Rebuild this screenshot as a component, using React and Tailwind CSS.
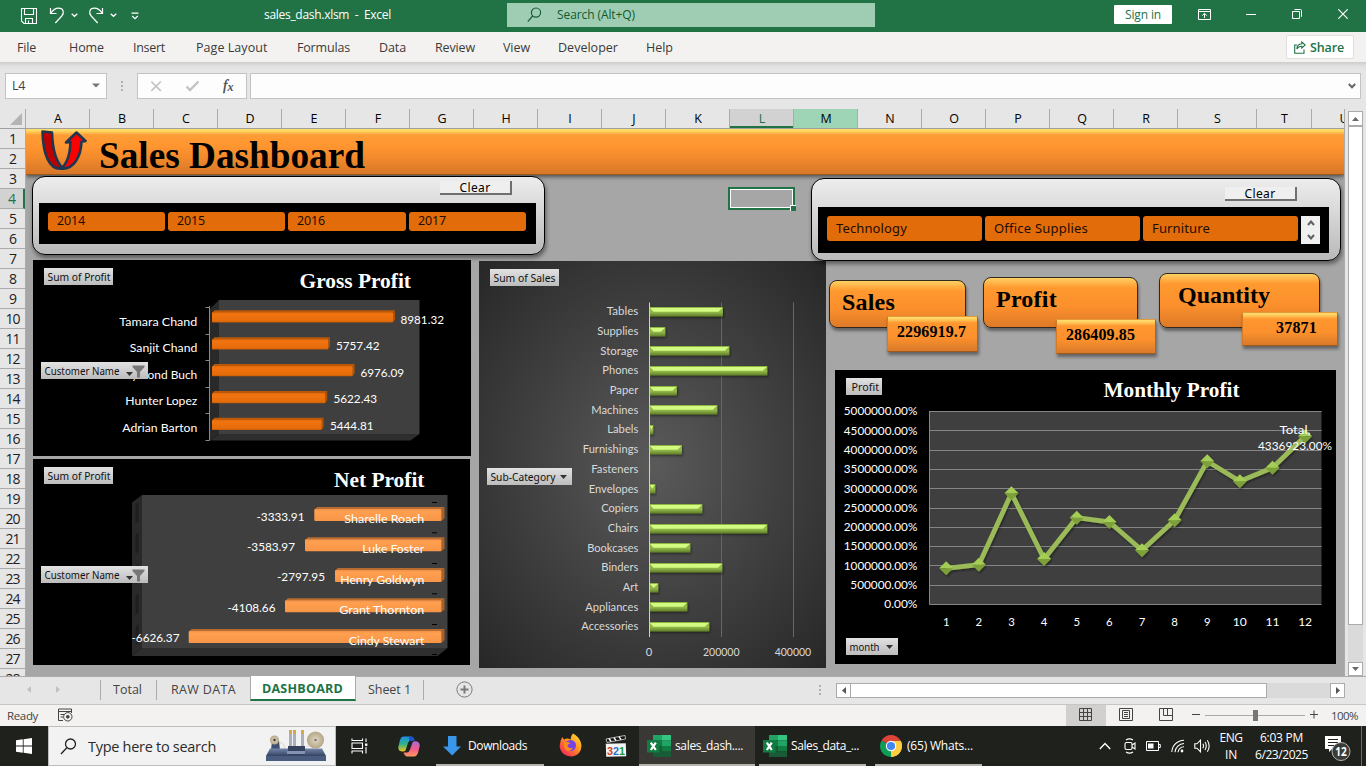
import React, { useLayoutEffect, useRef, useState } from "react";

/* Single-line label whose tracking is adjusted so that it fills a given width. */
function Fit({ w, className = "", children }) {
  const ref = useRef(null);
  const [ls, setLs] = useState(0);
  useLayoutEffect(() => {
    const el = ref.current;
    const n = el.textContent.length;
    const natural = el.getBoundingClientRect().width;
    setLs((w - natural) / n);
  }, [w]);
  return (
    <span ref={ref} className={"inline-block whitespace-pre " + className} style={{ letterSpacing: ls + "px" }}>
      {children}
    </span>
  );
}

/* ---------------------------------------------------------------- title bar */
function Caret({ className = "" }) {
  return (
    <svg width="7" height="5" viewBox="0 0 7 5" className={className}>
      <path d="M0.7 0.7 L3.5 3.3 L6.3 0.7" fill="none" stroke="currentColor" strokeWidth="1.3" />
    </svg>
  );
}

function TitleBar() {
  return (
    <header className="flex h-8 w-full shrink-0 items-center bg-[#217346] text-white">
      <div className="flex h-8 w-[264px] shrink-0 items-center pb-px pl-[20px]">
        <svg width="17" height="17" viewBox="0 0 17 17" fill="none" stroke="#fff" strokeWidth="1.1">
          <path d="M1.5 1.5 H16.5 V16.5 H4 L1.5 14 Z M4.5 1.5 V7.5 H13.5 V1.5 M5.5 16.5 V11.5 H12.5 V16.5 M8.5 16.5 V13.5" />
        </svg>
        <svg width="16" height="17" viewBox="0 0 16 17" fill="none" stroke="#fff" strokeWidth="1.2" className="ml-[12px]">
          <path d="M1.5 1 V6.5 H7.5 M1.7 6.3 C4 3 6.5 1.2 9.5 1.2 C14.8 1.2 15.4 6 12.8 9 L6.3 16" />
        </svg>
        <Caret className="ml-[6px]" />
        <svg width="16" height="17" viewBox="0 0 16 17" fill="none" stroke="#fff" strokeWidth="1.2" className="ml-[10px]">
          <path d="M14.5 1 V6.5 H8.5 M14.3 6.3 C12 3 9.5 1.2 6.5 1.2 C1.2 1.2 0.6 6 3.2 9 L9.7 16" />
        </svg>
        <Caret className="ml-[6px]" />
        <svg width="8" height="8" viewBox="0 0 8 8" fill="none" stroke="#fff" strokeWidth="1.2" className="ml-[14px]">
          <path d="M0.5 1.2 H7.5 M1.2 4 L4 6.6 L6.8 4" />
        </svg>
      </div>
      <div className="w-[243px] shrink-0 pb-[3px] font-['Open_Sans',sans-serif] text-[12px] leading-4">
        <Fit w={127}>sales_dash.xlsm  -  Excel</Fit>
      </div>
      <div className="mb-[2px] flex h-6 w-[368px] shrink-0 items-center bg-[#9fcdb3] pl-5 text-[#0f5a30]">
        <svg width="15" height="16" viewBox="0 0 15 16" fill="none" stroke="#185c37" strokeWidth="1.2">
          <circle cx="9" cy="5.6" r="4.6" />
          <path d="M5.6 9 L0.8 14.6" />
        </svg>
        <div className="ml-[15px] font-['Open_Sans',sans-serif] text-[12px] leading-4">
          <Fit w={78}>Search (Alt+Q)</Fit>
        </div>
      </div>
      <div className="ml-auto flex h-8 items-center">
        <div className="mb-[3px] mr-[26px] flex h-[19px] w-[58px] items-center justify-center rounded-[1px] bg-white font-['Open_Sans',sans-serif] text-[12px] leading-4 text-[#217346]">
          <Fit w={36}>Sign in</Fit>
        </div>
        <svg width="13" height="11" viewBox="0 0 13 11" fill="none" stroke="#fff" className="mb-[3px] mr-[35px]">
          <path d="M0.5 0.5 H12.5 V10.5 H0.5 Z M0.5 2.5 H12.5 M6.5 9 V4.5 M4.2 6.6 L6.5 4.4 L8.8 6.6" />
        </svg>
        <svg width="10" height="11" viewBox="0 0 10 11" stroke="#fff" className="mb-[4px] mr-[36px]">
          <path d="M0 5.5 H10" />
        </svg>
        <svg width="10" height="10" viewBox="0 0 10 10" fill="none" stroke="#fff" className="mb-[4px] mr-[36px]">
          <path d="M0.5 2.5 H7.5 V9.5 H0.5 Z M2.5 0.5 H8.5 Q9.5 0.5 9.5 1.5 V7.8" />
        </svg>
        <svg width="10" height="10" viewBox="0 0 10 10" stroke="#fff" strokeWidth="1.2" className="mb-[4px] mr-[18px]">
          <path d="M0.3 0.3 L9.7 9.7 M9.7 0.3 L0.3 9.7" />
        </svg>
      </div>
    </header>
  );
}

/* ---------------------------------------------------------------- menu bar */
function MenuBar() {
  return (
    <nav className="flex h-[30px] w-full shrink-0 items-center bg-[#f3f2f1] pl-[17px] font-['Open_Sans',sans-serif] text-[12.5px] leading-4 text-[#3b3a39]">
      <div className="mt-px flex">
        <div className="w-[52px] shrink-0"><Fit w={19}>File</Fit></div>
        <div className="w-[64px] shrink-0"><Fit w={35}>Home</Fit></div>
        <div className="w-[63px] shrink-0"><Fit w={32}>Insert</Fit></div>
        <div className="w-[101px] shrink-0"><Fit w={71.5}>Page Layout</Fit></div>
        <div className="w-[82px] shrink-0"><Fit w={53}>Formulas</Fit></div>
        <div className="w-[56px] shrink-0"><Fit w={27}>Data</Fit></div>
        <div className="w-[68px] shrink-0"><Fit w={40}>Review</Fit></div>
        <div className="w-[55px] shrink-0"><Fit w={27}>View</Fit></div>
        <div className="w-[88px] shrink-0"><Fit w={60}>Developer</Fit></div>
        <div className="shrink-0"><Fit w={27}>Help</Fit></div>
      </div>
      <div className="ml-auto mr-[12px] flex h-6 w-[68px] items-center rounded-[2px] border border-[#e1dfdd] bg-white pl-[7px] font-semibold text-[#217346]">
        <svg width="12" height="13" viewBox="0 0 12 13" fill="none" stroke="#217346" strokeWidth="1.1">
          <path d="M3 4 H0.7 V12.2 H10 V8.5 M7.8 1 L11.3 4 L7.8 7 V5.2 C5.5 5 4 6 2.8 8 C3 5 5 3 7.8 2.8 Z" />
        </svg>
        <div className="ml-1 mt-px"><Fit w={34}>Share</Fit></div>
      </div>
    </nav>
  );
}

/* ---------------------------------------------------------------- formula bar */
function FormulaBar() {
  return (
    <div className="flex h-[47px] w-full shrink-0 bg-[#e6e6e6]">
      <div className="flex h-full w-full bg-[linear-gradient(180deg,#cdcccb_0px,#e0e0e0_4px,#e6e6e6_8px)] pl-[5px] pt-[11px]">
        <div className="flex h-[26px] w-[102px] items-center justify-between border border-[#c3c3c3] bg-[#fdfdfd] pl-[6px] pr-[6px] pt-px font-['Open_Sans',sans-serif] text-[12.5px] text-[#444]">
          <Fit w={13}>L4</Fit>
          <svg width="8" height="5" viewBox="0 0 8 5" className="mb-[3px]"><path d="M0 0.5 H8 L4 4.5 Z" fill="#777" /></svg>
        </div>
        <svg width="30" height="26" viewBox="0 0 30 26" fill="#b0b0b0">
          <rect x="14" y="8" width="2" height="2" /><rect x="14" y="12" width="2" height="2" /><rect x="14" y="16" width="2" height="2" />
        </svg>
        <div className="flex h-[26px] w-[110px] items-center border border-[#c3c3c3] bg-[#fdfdfd]">
          <svg width="108" height="24" viewBox="0 0 108 24" fill="none">
            <path d="M13.3 7.5 L22.8 16.8 M22.8 7.5 L13.3 16.8" stroke="#c3c3c3" strokeWidth="1.7" />
            <path d="M48.5 12.5 L52 16 L60.5 7.5" stroke="#c3c3c3" strokeWidth="2.4" />
            <text x="85" y="15.5" fontFamily="Liberation Serif, serif" fontStyle="italic" fontSize="15" fill="#444" stroke="#444" strokeWidth="0.3">f</text>
            <text x="89.5" y="16.5" fontFamily="Liberation Serif, serif" fontStyle="italic" fontWeight="bold" fontSize="12" fill="#555">x</text>
          </svg>
        </div>
        <div className="ml-[3px] flex h-[26px] w-[1111px] items-center justify-end border border-[#c3c3c3] bg-[#fdfdfd] pr-[4px] text-[#666]">
          <svg width="8" height="6" viewBox="0 0 8 6" className="mb-px"><path d="M0.8 1 L4 4.3 L7.2 1" fill="none" stroke="#666" strokeWidth="2" /></svg>
        </div>
      </div>
    </div>
  );
}

/* ---------------------------------------------------------------- grid headers */
const COLS = "ABCDEFGHIJKLMNOPQR".split("");
function ColumnHeaders() {
  const base = "flex h-full shrink-0 items-center justify-center border-r border-[#ababab] pl-px pt-px";
  return (
    <div className="flex h-5 w-[1344px] shrink-0 overflow-hidden border-b border-[#9f9f9f] bg-[#e6e6e6] font-['Open_Sans',sans-serif] text-[12.5px] text-black">
      <div className="flex h-full w-[26px] shrink-0 items-end justify-end border-r border-[#ababab] pb-[3px] pr-[3px]">
        <svg width="12" height="12" viewBox="0 0 12 12"><path d="M12 0 V12 H0 Z" fill="#b4b4b4" /></svg>
      </div>
      {COLS.map((c) => (
        <div
          key={c}
          className={
            base + " w-16" +
            (c === "L"
              ? " bg-[#d2d2d2] text-[#217346] shadow-[inset_0_-2px_0_#217346]"
              : c === "M"
                ? " bg-[#9fd5b7]"
                : "")
          }
        >
          {c}
        </div>
      ))}
      <div className={base + " w-[79px]"}>S</div>
      <div className={base + " w-[55px]"}>T</div>
      <div className="flex h-full w-16 shrink-0 items-center justify-center pt-px">U</div>
    </div>
  );
}

function RowHeaders() {
  return (
    <div className="h-[547px] w-[26px] shrink-0 overflow-hidden border-r border-[#ababab] bg-[#e6e6e6] font-['Open_Sans',sans-serif] text-[14px] tracking-[-0.9px] text-[#222]">
      {Array.from({ length: 28 }, (_, i) => i + 1).map((n) => (
        <div
          key={n}
          className={
            "flex h-5 items-center justify-center border-b border-[#ababab] pt-px leading-[18px]" +
            (n === 4 ? " border-r-2 border-r-[#217346] bg-[#d2d2d2] text-[#217346]" : "")
          }
        >
          {n}
        </div>
      ))}
    </div>
  );
}

/* ---------------------------------------------------------------- svg helpers */
function Label({ x, y, w, end, fill = "#fff", size = 12, font = "Lato, sans-serif", weight, children }) {
  return (
    <text
      x={end ? x - w : x}
      y={y}
      textLength={w}
      lengthAdjust="spacingAndGlyphs"
      fill={fill}
      fontSize={size}
      fontFamily={font}
      fontWeight={weight}
    >
      {children}
    </text>
  );
}
const SERIF = "Liberation Serif, serif";
const UI = "Noto Sans, sans-serif";

function Chip({ x, y, w, tx, tw, caret, funnel, children }) {
  return (
    <g>
      <rect x={x} y={y} width={w} height="17" fill="url(#chip)" />
      <Label x={tx} y={y + 13} w={tw} size={11.5} font={UI} fill="#111">{children}</Label>
      {caret && <path d={`M${caret} ${y + 7} h7 l-3.5 4 z`} fill="#333" />}
      {funnel && (
        <g>
          <path d={`M${x + 85} ${y + 10} h7 l-3.5 4 z`} fill="#333" />
          <path d={`M${x + 91.5} ${y + 3.5} h12 v1.5 l-4.5 5 v5.5 h-3 v-5.5 l-4.5 -5 z`} fill="#777" />
        </g>
      )}
    </g>
  );
}

function SharedDefs() {
  return (
    <svg width="0" height="0" className="absolute">
      <defs>
        <linearGradient id="chip" x1="0" y1="0" x2="0" y2="1">
          <stop offset="0" stopColor="#e2e2e2" /><stop offset="1" stopColor="#bcbcbc" />
        </linearGradient>
        <linearGradient id="barDark" x1="0" y1="0" x2="0" y2="1">
          <stop offset="0" stopColor="#e2690b" /><stop offset="0.2" stopColor="#f27410" /><stop offset="0.85" stopColor="#e46c0a" /><stop offset="1" stopColor="#c25a06" />
        </linearGradient>
        <linearGradient id="barLight" x1="0" y1="0" x2="0" y2="1">
          <stop offset="0" stopColor="#f0924a" /><stop offset="0.2" stopColor="#ff9f50" /><stop offset="1" stopColor="#f79646" />
        </linearGradient>
        <linearGradient id="green" x1="0" y1="0" x2="0" y2="1">
          <stop offset="0" stopColor="#8db63f" /><stop offset="0.55" stopColor="#92b84c" /><stop offset="1" stopColor="#5e7c25" />
        </linearGradient>
        <radialGradient id="panel" cx="0.5" cy="0.5" r="0.72">
          <stop offset="0" stopColor="#5a5a5a" /><stop offset="1" stopColor="#262626" />
        </radialGradient>
        <filter id="soft" x="-20%" y="-50%" width="140%" height="220%">
          <feDropShadow dx="1" dy="1.5" stdDeviation="1" floodColor="#000" floodOpacity="0.45" />
        </filter>
      </defs>
    </svg>
  );
}

/* ---------------------------------------------------------------- charts */
const GROSS = [
  ["Tamara Chand", 78, 326, 310.3, 395, "8981.32", 400.5, 323.7],
  ["Sanjit Chand", 67.5, 352, 337.3, 330, "5757.42", 336, 350],
  ["Raymond Buch", 79, 378.7, 364, 354.7, "6976.09", 360.5, 376.7],
  ["Hunter Lopez", 72, 405, 391, 327.3, "5622.43", 333.5, 403],
  ["Adrian Barton", 75, 432, 417.7, 323.7, "5444.81", 330, 429.7],
];

function GrossProfit() {
  return (
    <svg width="438" height="196" viewBox="33 260 438 196" className="absolute left-[7px] top-[131px] bg-black">
      <path d="M219 300 H419.5 V434 H219 Z" fill="#3f3f3f" />
      <path d="M210 309 L219 300 V434 L210 440.5 Z" fill="#292929" />
      <path d="M210 440.5 L219 434 H419.5 L410.5 440.5 Z" fill="#2e2e2e" />
      <path d="M209.5 306 V440.5 M205.5 307.5 h4 M205.5 334.5 h4 M205.5 360.5 h4 M205.5 387.5 h4 M205.5 413.5 h4 M205.5 440.5 h4" stroke="#8a8a8a" fill="none" />
      {GROSS.map(([name, nw, ny, top, end, val, vx, vy]) => (
        <g key={name}>
          <path d={`M212 ${top + 2.5} L214.5 ${top} H${end} L${end - 2} ${top + 2.5} Z`} fill="#b85808" />
          <path d={`M${end - 2} ${top + 2.5} L${end} ${top} V${top + 9} L${end - 2} ${top + 12.3} Z`} fill="#ad5308" />
          <rect x="212" y={top + 2} width={end - 214} height="10.3" rx="1" fill="url(#barDark)" />
          <Label x={197.3} y={ny} w={nw} end>{name}</Label>
          <Label x={vx} y={vy} w={43.5} size={11.8}>{val}</Label>
        </g>
      ))}
      <Label x={299.5} y={288} w={111.5} size={20.5} font={SERIF} weight="bold">Gross Profit</Label>
      <Chip x={44} y={268} w={69} tx={47.5} tw={63}>Sum of Profit</Chip>
      <Chip x={41} y={362} w={107} tx={44.5} tw={75} funnel>Customer Name</Chip>
    </svg>
  );
}

const NET = [
  ["Sharelle Roach", 80, 523, 507, 314.3, "-3333.91", 304.5, 521],
  ["Luke Foster", 62, 553, 537.3, 305, "-3583.97", 295, 551],
  ["Henry Goldwyn", 84, 584, 568, 335, "-2797.95", 325, 581],
  ["Grant Thornton", 85, 614, 598.3, 285, "-4108.66", 275.5, 612],
  ["Cindy Stewart", 75.5, 645, 629, 188.7, "-6626.37", 179.5, 642],
];

function NetProfit() {
  return (
    <svg width="437" height="206" viewBox="33 459 437 206" className="absolute left-[7px] top-[330px] bg-black">
      <path d="M142 495 H447.5 V648 H142 Z" fill="#3f3f3f" />
      <path d="M132 502.5 L142 495 V648 L132 656 Z" fill="#292929" />
      <path d="M132 656 L142 648 H447.5 L437.5 656 Z" fill="#2e2e2e" />
      {NET.map(([name, nw, ny, top, left, val, vx, vy]) => (
        <g key={name}>
          <path d={`M135.5 ${top - 2} l3 -3 v19 l-3 3 z`} fill="#1e1e1e" />
          <path d={`M${left} ${top + 2.5} L${left + 3} ${top} H444.5 L441.5 ${top + 2.5} Z`} fill="#b96c2f" />
          <path d={`M441.5 ${top + 2.5} L444.5 ${top} V${top + 11} L441.5 ${top + 14} Z`} fill="#a9622a" />
          <rect x={left} y={top + 2} width={441.5 - left} height="12" rx="1" fill="url(#barLight)" />
          <path d={`M432 ${top - 4.5} h5`} stroke="#000" />
          <Label x={424.3} y={ny} w={nw} end>{name}</Label>
          <Label x={vx} y={vy} w={48} end size={11.8}>{val}</Label>
        </g>
      ))}
      <path d="M432 654.5 h5" stroke="#000" />
      <Label x={334} y={487} w={90.5} size={20.5} font={SERIF} weight="bold">Net Profit</Label>
      <Chip x={44} y={467} w={69} tx={47.5} tw={63}>Sum of Profit</Chip>
      <Chip x={41} y={566} w={107} tx={44.5} tw={75} funnel>Customer Name</Chip>
    </svg>
  );
}

const SUBCATS = [
  ["Tables", 31.5, 723.3], ["Supplies", 41, 665.7], ["Storage", 38, 729.7], ["Phones", 36, 767.7],
  ["Paper", 28.5, 677.3], ["Machines", 47, 717.7], ["Labels", 31, 653.7], ["Furnishings", 55.5, 682.3],
  ["Fasteners", 47, 650.5], ["Envelopes", 49.5, 655.7], ["Copiers", 37, 702.7], ["Chairs", 30.5, 767.7],
  ["Bookcases", 51, 690.7], ["Binders", 37, 722.7], ["Art", 15.5, 658.7], ["Appliances", 53, 687.7],
  ["Accessories", 57, 709.7],
];

function SalesBySubCategory() {
  return (
    <svg width="347" height="407" viewBox="479 261 347 407" className="absolute left-[453px] top-[132px]">
      <rect x="479" y="261" width="347" height="407" fill="url(#panel)" />
      <path d="M721.5 302.5 V637 M793.5 302.5 V637" stroke="#666" />
      {SUBCATS.map(([name, w, right], i) => {
        const top = Math.round(307 + 19.69 * i);
        const end = right - 0.4;
        const len = end - 649;
        const b = Math.min(4.5, len / 2);
        return (
          <g key={name}>
            <g filter={len > 2 ? "url(#soft)" : undefined}>
              <rect x="649" y={top} width={len} height="9.5" fill="url(#green)" />
              {len > 2 && <path d={`M650 ${top + 1} H${end - 0.5} L${end - b} ${top + 4.8} H${649 + b} Z`} fill="#d3fb82" />}
            </g>
            <Label x={638.3} y={315.3 + 19.69 * i} w={w} end size={11.5} fill="#d9d9d9">{name}</Label>
          </g>
        );
      })}
      <path d="M649.5 302.5 V637" stroke="#cfcfcf" />
      <Label x={645.7} y={656} w={6.5} size={11.5} fill="#d9d9d9">0</Label>
      <Label x={703} y={656} w={36.5} size={11.5} fill="#d9d9d9">200000</Label>
      <Label x={774.7} y={656} w={36.5} size={11.5} fill="#d9d9d9">400000</Label>
      <Chip x={490} y={269} w={69} tx={493.5} tw={62}>Sum of Sales</Chip>
      <Chip x={487} y={468} w={85} tx={490.5} tw={65} caret={560}>Sub-Category</Chip>
    </svg>
  );
}

const MONTH_Y = [568.3, 564.7, 493.3, 559, 517.7, 522, 550.3, 520.3, 461.3, 481.3, 467.7, 436.3];
const MONTH_X = MONTH_Y.map((_, i) => 946.2 + 32.63 * i);
const TICKS = ["5000000.00%", "4500000.00%", "4000000.00%", "3500000.00%", "3000000.00%", "2500000.00%", "2000000.00%", "1500000.00%", "1000000.00%", "500000.00%", "0.00%"];

function MonthlyProfit() {
  return (
    <svg width="501" height="294" viewBox="835 370 501 294" className="absolute left-[809px] top-[241px] bg-black">
      <rect x="929" y="411" width="392.5" height="193.5" fill="#3f3f3f" />
      {TICKS.map((t, i) => (
        <g key={t}>
          <path d={`M929.5 ${Math.round(411 + 19.3 * i) + 0.5} H1321.5`} stroke="#868686" />
          <Label x={917.3} y={415.3 + 19.3 * i} w={i === 10 ? 33 : i === 9 ? 67 : 73.5} end size={12.2}>{t}</Label>
        </g>
      ))}
      <path d="M929.5 411 V604.5" stroke="#868686" />
      <g filter="url(#soft)">
        <polyline points={MONTH_X.map((x, i) => `${x},${MONTH_Y[i]}`).join(" ")} fill="none" stroke="#9bbb59" strokeWidth="4.8" strokeLinejoin="round" />
        {MONTH_X.map((x, i) => (
          <g key={i}>
            <path d={`M${x - 7} ${MONTH_Y[i]} L${x} ${MONTH_Y[i] - 7} L${x + 7} ${MONTH_Y[i]} Z`} fill="#a3cd55" />
            <path d={`M${x - 7} ${MONTH_Y[i]} L${x} ${MONTH_Y[i] + 7} L${x + 7} ${MONTH_Y[i]} Z`} fill="#7da03b" />
          </g>
        ))}
      </g>
      {MONTH_X.map((x, i) => (
        <Label key={i} x={x - (i > 8 ? 7 : 3.3)} y={626} w={i > 8 ? 14 : 6.6} size={12.2}>{String(i + 1)}</Label>
      ))}
      <Label x={1279.5} y={433.7} w={31}>Total,</Label>
      <Label x={1258} y={449.7} w={74} size={11.8}>4336923.00%</Label>
      <Label x={1103.5} y={397} w={136} size={20.5} font={SERIF} weight="bold">Monthly Profit</Label>
      <Chip x={846} y={378} w={36} tx={851.5} tw={27.5}>Profit</Chip>
      <Chip x={846} y={638} w={52} tx={849.5} tw={30} caret={886}>month</Chip>
    </svg>
  );
}

/* ---------------------------------------------------------------- slicers and cards */
function ClearButton({ className }) {
  return (
    <div className={"flex h-[14px] w-[72px] items-start justify-center overflow-hidden border-b-2 border-r-2 border-b-[#6f6f6f] border-r-[#6f6f6f] bg-[#efefef] font-['Noto_Sans',sans-serif] text-[12px] leading-[14px] text-black " + className}>
      <Fit w={31}>Clear</Fit>
    </div>
  );
}

function YearSlicer() {
  const b = "flex h-[19px] items-center rounded-[3px] bg-[#e36c0a] pl-[9px] font-['Noto_Sans',sans-serif] text-[12.5px] leading-none text-[#1c0d00]";
  return (
    <section className="absolute left-[6px] top-[47px] flex h-[79px] w-[513px] flex-col rounded-[13px] border-[1.5px] border-black bg-[linear-gradient(180deg,#ededed,#b9b9b9)] pl-[6px] pt-[4px] shadow-[1px_3px_4px_rgba(0,0,0,0.45)]">
      <ClearButton className="ml-[401px]" />
      <div className="mt-[8px] flex h-[41px] w-[497px] gap-[3px] bg-black pl-[9px] pt-[9px]">
        <div className={b + " w-[117px]"}><Fit w={28}>2014</Fit></div>
        <div className={b + " w-[117px]"}><Fit w={28}>2015</Fit></div>
        <div className={b + " w-[118px]"}><Fit w={28}>2016</Fit></div>
        <div className={b + " w-[117px]"}><Fit w={28}>2017</Fit></div>
      </div>
    </section>
  );
}

function CategorySlicer() {
  const b = "flex h-[25px] w-[155px] items-center rounded-[3px] bg-[#e36c0a] pl-[9px] font-['Noto_Sans',sans-serif] text-[13px] leading-none text-[#1c0d00]";
  return (
    <section className="absolute left-[785px] top-[49px] flex h-[83px] w-[530px] flex-col rounded-[13px] border-[1.5px] border-black bg-[linear-gradient(180deg,#ededed,#b9b9b9)] pl-[6px] pt-[8px] shadow-[1px_3px_4px_rgba(0,0,0,0.45)]">
      <ClearButton className="ml-[407px]" />
      <div className="mt-[6px] flex h-[46px] w-[511px] gap-[3px] bg-black pl-[9px] pt-[9px]">
        <div className={b}><Fit w={71}>Technology</Fit></div>
        <div className={b}><Fit w={94}>Office Supplies</Fit></div>
        <div className={b}><Fit w={58}>Furniture</Fit></div>
        <div className="flex h-[28px] w-[19px] flex-col items-center justify-between bg-[#f0f0f0] py-[4px]">
          <svg width="8" height="6" viewBox="0 0 8 6"><path d="M1 5 L4 1.5 L7 5" fill="none" stroke="#606060" strokeWidth="2" /></svg>
          <svg width="8" height="6" viewBox="0 0 8 6"><path d="M1 1 L4 4.5 L7 1" fill="none" stroke="#606060" strokeWidth="2" /></svg>
        </div>
      </div>
    </section>
  );
}

const CARD =
  "absolute rounded-[8px] border-[1.5px] border-[#33281c] bg-[linear-gradient(180deg,#ffd166_0px,#ffb347_5px,#ff992f_10px,#fb8f2c_60%,#dd7a28_100%)] font-['Liberation_Serif',serif] text-[24px] font-bold leading-6 text-black shadow-[1px_3px_3px_rgba(0,0,0,0.4)]";
const VALUE =
  "absolute border border-b-[#a05a1c] border-l-[#d27a25] border-r-[#b0641f] border-t-[#e59a3a] bg-[linear-gradient(180deg,#ffe070_0px,#ffc455_3px,#ff962f_6px,#fc912d_60%,#d97a2a_100%)] font-['Liberation_Serif',serif] text-[16px] font-bold leading-4 text-black shadow-[1px_3px_3px_rgba(0,0,0,0.4)]";

function Kpis() {
  return (
    <>
      <div className={CARD + " left-[803px] top-[151px] h-[48px] w-[137px] pl-[12px] pt-[9px]"}><Fit w={53}>Sales</Fit></div>
      <div className={CARD + " left-[957px] top-[148px] h-[51px] w-[155px] pl-[12px] pt-[9px]"}><Fit w={61}>Profit</Fit></div>
      <div className={CARD + " left-[1133px] top-[144px] h-[55px] w-[161px] pl-[18px] pt-[9px]"}><Fit w={92}>Quantity</Fit></div>
      <div className={VALUE + " left-[861px] top-[187px] h-[36px] w-[91px] pl-[9px] pt-[7px]"}><Fit w={69}>2296919.7</Fit></div>
      <div className={VALUE + " left-[1030px] top-[190px] h-[35px] w-[100px] pl-[9px] pt-[7px]"}><Fit w={69}>286409.85</Fit></div>
      <div className={VALUE + " left-[1216px] top-[183px] h-[34px] w-[96px] pl-[33px] pt-[7px]"}><Fit w={41}>37871</Fit></div>
    </>
  );
}

function Banner() {
  return (
    <div className="flex h-[46px] w-full items-start border-b border-[#9a5a1e] bg-[linear-gradient(180deg,#ffdf6b_0px,#ffd65f_2px,#ff9c35_6px,#ff9630_16px,#f48b2c_28px,#d87828_44px)] shadow-[0_2px_4px_rgba(0,0,0,0.5)]">
      <svg width="46" height="41" viewBox="0 0 46 41" className="ml-[15px] mt-[1px]">
        <path d="M1.5 1.5 L11 2.5 C11.5 18 14 31 22 38.5 C8 41 2 24 1.5 1.5 Z" fill="#c00000" stroke="#1f3652" strokeWidth="2.6" strokeLinejoin="round" />
        <path d="M20 38.5 C26 34 29 24 29.5 12 L25 12.5 L35.5 2.5 L44.5 11 L40.5 11.8 C40 26 33 40 20 38.5 Z" fill="#ff0000" stroke="#1f3652" strokeWidth="2.6" strokeLinejoin="round" />
      </svg>
      <div className="ml-[12px] mt-[5px] h-[40px] font-['Liberation_Serif',serif] text-[37.3px] font-bold leading-[44px] text-black">
        <Fit w={266}>Sales Dashboard</Fit>
      </div>
    </div>
  );
}

function Sheet() {
  return (
    <main className="relative h-[547px] w-[1318px] shrink-0 overflow-hidden bg-[#a6a6a6]">
      <SharedDefs />
      <Banner />
      <div className="absolute left-[702px] top-[58px] h-[23px] w-[67px] border-2 border-[#217346]">
        <div className="h-full w-full border border-white" />
      </div>
      <div className="absolute left-[764px] top-[76px] h-[6px] w-[6px] border-l border-t border-white bg-[#217346]" />
      <YearSlicer />
      <GrossProfit />
      <NetProfit />
      <SalesBySubCategory />
      <CategorySlicer />
      <Kpis />
      <MonthlyProfit />
    </main>
  );
}

function VScroll() {
  return (
    <div className="flex h-[567px] w-[22px] shrink-0 flex-col border-l border-[#ababab] bg-[#e6e6e6] pl-[3px] pt-[2px]">
      <div className="flex h-[15px] w-[15px] items-center justify-center border border-[#ababab] bg-white">
        <svg width="7" height="4" viewBox="0 0 7 4"><path d="M0 4 L3.5 0 L7 4 Z" fill="#6a6a6a" /></svg>
      </div>
      <div className="h-[499px] w-[15px] border border-[#ababab] bg-white" />
      <div className="h-[37px] w-[15px] bg-[#dadada]" />
      <div className="flex h-[14px] w-[15px] items-center justify-center border border-[#ababab] bg-white">
        <svg width="7" height="4" viewBox="0 0 7 4"><path d="M0 0 L3.5 4 L7 0 Z" fill="#6a6a6a" /></svg>
      </div>
    </div>
  );
}

/* ---------------------------------------------------------------- sheet tabs and status */
function SheetTabs() {
  return (
    <div className="flex h-[29px] w-full shrink-0 border-b border-[#c6c6c6] bg-[#e6e6e6] font-['Open_Sans',sans-serif] text-[12.5px] leading-4 text-[#444]">
      <div className="flex w-full border-t border-[#ababab] bg-[#e6e6e6]">
        <div className="flex w-[100px] items-center pb-[2px] pl-[27px]">
          <svg width="4" height="7" viewBox="0 0 4 7"><path d="M4 0 V7 L0 3.5 Z" fill="#c0c0c0" /></svg>
          <svg width="4" height="7" viewBox="0 0 4 7" className="ml-[25px]"><path d="M0 0 V7 L4 3.5 Z" fill="#c0c0c0" /></svg>
        </div>
        <div className="mt-[3px] flex h-5 w-[57px] items-center border-l border-r border-[#ababab] pl-[12px]"><Fit w={29}>Total</Fit></div>
        <div className="mt-[3px] flex h-5 w-[93px] items-center pl-[14px]"><Fit w={65}>RAW DATA</Fit></div>
        <div className="-mt-px flex h-[25px] w-[106px] items-center border-b-2 border-l border-r border-b-[#217346] border-l-[#ababab] border-r-[#ababab] bg-white pl-[11px] pt-[3px] font-bold text-[#217346]"><Fit w={81}>DASHBOARD</Fit></div>
        <div className="mt-[3px] flex h-5 w-[68px] items-center border-r border-[#ababab] pl-[12px]"><Fit w={43}>Sheet 1</Fit></div>
        <svg width="17" height="17" viewBox="0 0 17 17" fill="none" stroke="#7a7a7a" className="ml-[32px] mt-[4px]">
          <circle cx="8.5" cy="8.5" r="7.6" />
          <path d="M8.5 4.5 V12.5 M4.5 8.5 H12.5" strokeWidth="2" />
        </svg>
        <svg width="2" height="11" viewBox="0 0 2 11" fill="#b0b0b0" className="ml-auto mr-[15px] mt-[8px]">
          <rect y="0" width="2" height="2" /><rect y="4" width="2" height="2" /><rect y="8" width="2" height="2" />
        </svg>
        <div className="mr-[21px] mt-[6px] flex h-[15px] w-[509px]">
          <div className="flex w-[15px] items-center justify-center border border-[#ababab] bg-white">
            <svg width="4" height="7" viewBox="0 0 4 7"><path d="M4 0 V7 L0 3.5 Z" fill="#555" /></svg>
          </div>
          <div className="w-[416px] border border-l-0 border-[#ababab] bg-white" />
          <div className="w-[63px] bg-[#dadada]" />
          <div className="flex w-[15px] items-center justify-center border border-[#ababab] bg-white">
            <svg width="4" height="7" viewBox="0 0 4 7"><path d="M0 0 V7 L4 3.5 Z" fill="#555" /></svg>
          </div>
        </div>
      </div>
    </div>
  );
}

function StatusBar() {
  return (
    <div className="flex h-[21px] w-full shrink-0 items-center bg-[#f3f2f1] pl-[7px] font-['Open_Sans',sans-serif] text-[11.5px] leading-4 text-[#444]">
      <Fit w={31}>Ready</Fit>
      <svg width="15" height="14" viewBox="0 0 15 14" fill="none" stroke="#444" className="mb-[2px] ml-[20px]">
        <path d="M5 12.5 H0.5 V1 H13.5 V5 M0.5 3.5 H13.5 M2.5 6.5 H6 M2.5 9 H5" />
        <circle cx="9.8" cy="8.8" r="4.2" />
        <circle cx="9.8" cy="8.8" r="1.4" fill="#444" />
      </svg>
      <div className="ml-auto flex h-full items-center">
        <div className="flex h-full w-10 items-center bg-[#d2d0ce] pb-[2px] pl-[13px]">
          <svg width="13" height="13" viewBox="0 0 13 13" fill="none" stroke="#444"><path d="M0.5 0.5 H12.5 V12.5 H0.5 Z M4.5 0.5 V12.5 M8.5 0.5 V12.5 M0.5 4.5 H12.5 M0.5 8.5 H12.5" /></svg>
        </div>
        <svg width="14" height="13" viewBox="0 0 14 13" fill="none" stroke="#444" className="mb-[2px] ml-[13px]"><path d="M0.5 0.5 H13.5 V12.5 H0.5 Z M3.5 2.5 H10.5 V10.5 H3.5 Z M5 4.5 H9 M5 6.5 H9 M5 8.5 H9" /></svg>
        <svg width="14" height="13" viewBox="0 0 14 13" fill="none" stroke="#444" className="mb-[2px] ml-[26px]"><path d="M0.5 0.5 H13.5 V12.5 H0.5 Z M4.5 0.5 V7.5 H13.5 M8.5 0.5 V7.5" /></svg>
        <svg width="130" height="17" viewBox="0 0 130 17" fill="none" className="mb-[2px] ml-[17px]">
          <path d="M2 8.5 H10 M120 8.5 H128 M124 4.5 V12.5" stroke="#444" />
          <path d="M15 9.5 H115" stroke="#a9a9a9" />
          <rect x="63" y="4" width="5" height="11" fill="#767676" />
        </svg>
        <div className="ml-[11px] mr-[8px]"><Fit w={27}>100%</Fit></div>
      </div>
    </div>
  );
}

/* ---------------------------------------------------------------- taskbar */
function ExcelIcon() {
  return (
    <svg width="24" height="22" viewBox="0 0 24 22">
      <rect x="6" y="0" width="9" height="5.5" fill="#21a366" /><rect x="15" y="0" width="9" height="5.5" fill="#33c481" />
      <rect x="6" y="5.5" width="9" height="5.5" fill="#107c41" /><rect x="15" y="5.5" width="9" height="5.5" fill="#21a366" />
      <rect x="6" y="11" width="9" height="5.5" fill="#185c37" /><rect x="15" y="11" width="9" height="5.5" fill="#107c41" />
      <rect x="6" y="16.5" width="18" height="5.5" fill="#185c37" />
      <rect x="0" y="5" width="12.5" height="12.5" fill="#107c41" />
      <path d="M3.8 7.6 L8.8 15 M8.8 7.6 L3.8 15" stroke="#fff" strokeWidth="2.2" />
    </svg>
  );
}

function LatheArt() {
  return (
    <svg width="60" height="33" viewBox="0 0 60 33">
      <defs>
        <linearGradient id="base" x1="0" y1="0" x2="0" y2="1"><stop offset="0" stopColor="#7385ab" /><stop offset="1" stopColor="#33425f" /></linearGradient>
        <radialGradient id="disc"><stop offset="0" stopColor="#fff" /><stop offset="0.25" stopColor="#d6cbb0" /><stop offset="1" stopColor="#b3a687" /></radialGradient>
      </defs>
      <path d="M23 2 h3 v18 h-3 z M27 2 h3 v18 h-3 z M35 2 h3 v18 h-3 z" fill="#a9afbf" />
      <path d="M23 1 h3 v4 h-3 z M27 1 h3 v4 h-3 z M35 1 h3 v4 h-3 z" fill="#d6a64a" />
      <path d="M10 13 Q17 12 19 19 M41 18 Q44 14 46 7" stroke="#ddd3bd" fill="none" />
      <path d="M6 12 H13 L14 21 H5 Z" fill="#3f4f70" />
      <path d="M4 19.5 H56 L60 27 H0 Z" fill="url(#base)" />
      <rect x="0" y="27" width="60" height="5" fill="#4a5b80" />
      <rect x="22" y="17" width="17" height="9" fill="#35435f" />
      <path d="M21 22 H39 V25 H21 Z" fill="#8492b4" />
      <circle cx="8.5" cy="11" r="4.6" fill="url(#disc)" /><circle cx="8.5" cy="11" r="1.2" fill="#333" />
      <circle cx="49.5" cy="11" r="8.6" fill="url(#disc)" /><circle cx="49.5" cy="11" r="1.3" fill="#7a6a8a" />
    </svg>
  );
}

function Taskbar() {
  const lbl = "font-['Open_Sans',sans-serif] text-[12px] leading-4 text-white";
  return (
    <footer className="flex h-10 w-full shrink-0 bg-[#1f211c]">
      <div className="flex w-12 shrink-0 items-center justify-center">
        <svg width="16" height="16" viewBox="0 0 16 16" fill="#fff"><path d="M0 2.3 L6.8 1.3 V7.5 H0 Z M7.6 1.2 L16 0 V7.5 H7.6 Z M0 8.4 H6.8 V14.7 L0 13.7 Z M7.6 8.4 H16 V16 L7.6 14.8 Z" /></svg>
      </div>
      <div className="flex w-[288px] shrink-0 items-center border border-[#bdbdbd] bg-[#f2f2f2] pl-[11px]">
        <svg width="17" height="17" viewBox="0 0 17 17" fill="none" stroke="#222" strokeWidth="1.3"><circle cx="10.5" cy="6" r="5" /><path d="M6.8 9.8 L1 16" /></svg>
        <div className="ml-[11px] mt-px w-[129px] font-['Open_Sans',sans-serif] text-[14.5px] leading-5 text-[#2b2b2b]"><Fit w={128}>Type here to search</Fit></div>
        <div className="-mt-[2px] ml-[49px]"><LatheArt /></div>
      </div>
      <div className="flex w-[50px] shrink-0 items-center pl-[15px]">
        <svg width="17" height="16" viewBox="0 0 17 16" fill="none" stroke="#fff" strokeWidth="1.1"><path d="M1 0.5 V2.5 H11.5 V0.5 M1 5 H11.5 V10.5 H1 Z M1 15.5 V13 H11.5 V15.5 M15 0.5 V4 M15 9 V15.5" /><rect x="14" y="5.5" width="2.4" height="2.4" fill="#fff" stroke="none" /></svg>
      </div>
      <div className="flex w-[50px] shrink-0 items-center pl-[12px]">
        <svg width="22" height="21" viewBox="0 0 22 21">
          <defs>
            <linearGradient id="cpa" x1="0" y1="0" x2="0" y2="1"><stop offset="0" stopColor="#1c8fe8" /><stop offset="0.5" stopColor="#2fb08a" /><stop offset="1" stopColor="#f5c518" /></linearGradient>
            <linearGradient id="cpb" x1="0" y1="0" x2="0" y2="1"><stop offset="0" stopColor="#a56be0" /><stop offset="0.5" stopColor="#ef5a8c" /><stop offset="1" stopColor="#ff9a5a" /></linearGradient>
          </defs>
          <path d="M5 0.5 H13 Q15.5 0.5 16.5 4 H13 Q11 4 10 7 L7.5 14.5 Q6.5 15.8 4 15.5 Q0 15 0.3 11 L2 4 Q3 0.8 5 0.5 Z" fill="url(#cpa)" />
          <path d="M11 0.5 H13.5 Q15.5 0.8 16.5 5 H12.5 Q10.5 4 11 0.5 Z" fill="#1f4fd0" />
          <path d="M17 20.5 H9 Q6.5 20 5.5 16.5 H9 Q11 16.5 12 13.5 L14.5 6.5 Q15.5 5 18 5.3 Q22 6 21.7 10 L20 17 Q19 20 17 20.5 Z" fill="url(#cpb)" />
        </svg>
      </div>
      <div className="flex w-[108px] shrink-0 items-center border-b-2 border-[#b6b4ae] pl-[7px] pt-[1px]">
        <svg width="18" height="20" viewBox="0 0 18 20"><path d="M5 0 H13.5 V10.5 H18 L9.2 19.5 L0 10.5 H5 Z" fill="#3a96e8" /></svg>
        <div className={"ml-[7px] mt-px " + lbl}><Fit w={59}>Downloads</Fit></div>
      </div>
      <div className="flex w-[95px] shrink-0 items-center pl-[15px]">
        <svg width="23" height="24" viewBox="0 0 23 24" className="-mt-[2px]">
          <defs><linearGradient id="fx" x1="1" y1="0" x2="0.2" y2="1"><stop offset="0" stopColor="#ffe43a" /><stop offset="0.45" stopColor="#ff9a1f" /><stop offset="1" stopColor="#f5235a" /></linearGradient></defs>
          <path d="M14 0.5 Q20 4 21.5 8.5 Q24 15 20 20 Q15.5 24.5 9 23 Q2 21 0.8 14.5 Q0.2 9.5 3.2 4 L5 6.5 Q8 4.5 11.5 6.5 Q11.5 3 14 0.5 Z" fill="url(#fx)" />
          <circle cx="11.5" cy="12.5" r="5.5" fill="#7542e5" />
          <path d="M5 10 Q9 8 11.5 10.5 Q8.5 11 8.5 13 Q9.5 16 14 15 Q12 19 7.5 17.5 Q4 15 5 10 Z" fill="#ff8a1c" />
        </svg>
        <svg width="22" height="22" viewBox="0 0 22 22" className="-mt-px ml-[23px]">
          <path d="M1 4 L20 0.5 L20.5 4 L2 7.5 Z" fill="#111" stroke="#ddd" strokeWidth="0.8" />
          <path d="M4 3.5 L6 6.5 M9 2.6 L11 5.6 M14 1.7 L16 4.7" stroke="#fff" strokeWidth="1.5" />
          <rect x="1" y="8.5" width="20" height="13" fill="#f4f4f4" transform="rotate(-2 11 15)" />
          <text x="2" y="19.5" fontFamily="Liberation Sans, sans-serif" fontWeight="bold" fontSize="11.5" textLength="18" lengthAdjust="spacingAndGlyphs"><tspan fill="#d2401e">3</tspan><tspan fill="#2474c8">2</tspan><tspan fill="#1d9840">1</tspan></text>
        </svg>
      </div>
      <div className="flex w-[116px] shrink-0 items-center border-b-2 border-[#b6b4ae] bg-[#393834] pl-[8px] pt-[1px]">
        <ExcelIcon />
        <div className={"ml-[4px] mt-px " + lbl}><Fit w={68}>sales_dash....</Fit></div>
      </div>
      <div className="ml-[4px] flex w-[107px] shrink-0 items-center border-b-2 border-[#b6b4ae] pl-[4px] pt-[1px]">
        <ExcelIcon />
        <div className={"ml-[4px] mt-px " + lbl}><Fit w={68}>Sales_data_...</Fit></div>
      </div>
      <div className="ml-[9px] flex w-[107px] shrink-0 items-center border-b-2 border-[#b6b4ae] pl-[5px] pt-[1px]">
        <svg width="22" height="22" viewBox="0 0 22 22">
          <path d="M11 11 L1.5 5.5 A11 11 0 0 1 20.5 5.5 Z" fill="#db4437" />
          <path d="M11 11 L20.5 5.5 A11 11 0 0 1 11 22 Z" fill="#ffcd40" />
          <path d="M11 11 L11 22 A11 11 0 0 1 1.5 5.5 Z" fill="#0f9d58" />
          <path d="M11 6 H20.8 A11 11 0 0 1 11 22 L15.3 13.5 Z" fill="#ffcd40" />
          <circle cx="11" cy="11" r="5.2" fill="#fff" /><circle cx="11" cy="11" r="4.1" fill="#4285f4" />
        </svg>
        <div className={"ml-[5px] mt-px " + lbl}><Fit w={66}>(65) Whats...</Fit></div>
      </div>
      <div className="ml-auto flex items-center">
        <svg width="12" height="8" viewBox="0 0 12 8" fill="none" stroke="#fff" strokeWidth="1.4"><path d="M0.8 7 L6 1.5 L11.2 7" /></svg>
        <svg width="12" height="16" viewBox="0 0 12 16" fill="none" stroke="#fff" strokeWidth="1.1" className="ml-[13px]"><rect x="1" y="4.5" width="7" height="7" rx="1.5" /><path d="M8 7 L11 5 V11 L8 9 M2 2 Q5.5 -0.2 9 2 M2 14 Q5.5 16.2 9 14" /></svg>
        <svg width="15" height="10" viewBox="0 0 15 10" className="ml-[10px]"><path d="M0.5 0.5 H12.5 V9.5 H0.5 Z M13 3.5 H14.3 V6.5 H13" fill="none" stroke="#fff" /><rect x="2" y="2.5" width="5.5" height="5" fill="#fff" /></svg>
        <svg width="14" height="14" viewBox="0 0 14 14" fill="none" stroke="#fff" strokeWidth="1.1" className="ml-[10px]"><path d="M0.8 13 A12.5 12.5 0 0 1 13 1.2 M4 13.2 A9.3 9.3 0 0 1 13 4.5 M7 13.3 A6 6 0 0 1 13 7.8" /><circle cx="11" cy="12" r="1.4" fill="#fff" stroke="none" /></svg>
        <svg width="17" height="14" viewBox="0 0 17 14" fill="none" stroke="#fff" strokeWidth="1.1" className="ml-[9px]"><path d="M0.8 4.8 H3 L6.5 1.2 V12.8 L3 9.2 H0.8 Z M8.8 4.8 Q10.3 7 8.8 9.2 M11 3 Q13.5 7 11 11 M13.3 1.2 Q17 7 13.3 12.8" /></svg>
        <div className={"ml-[8px] flex w-6 flex-col items-center gap-px " + lbl}><Fit w={23}>ENG</Fit><Fit w={12}>IN</Fit></div>
        <div className={"ml-[12px] flex w-[53px] flex-col items-center gap-px " + lbl}><Fit w={43}>6:03 PM</Fit><Fit w={53}>6/23/2025</Fit></div>
        <svg width="27" height="26" viewBox="0 0 27 26" className="ml-[17px] mt-[6px]">
          <path d="M0 0 H16 V13 H7 L4 16 V13 H0 Z" fill="#fff" />
          <path d="M3 3.5 H13 M3 6.5 H13 M3 9.5 H9" stroke="#1f211c" />
          <circle cx="16" cy="15.5" r="9" fill="#3b3c39" stroke="#b5b5b5" />
          <text x="10.3" y="19.5" textLength="11.5" lengthAdjust="spacingAndGlyphs" fill="#fff" fontSize="11.5" fontWeight="bold" fontFamily="Open Sans, sans-serif">12</text>
        </svg>
        <div className="ml-[9px] mr-1 h-10 w-px bg-[#6a6a66]" />
      </div>
    </footer>
  );
}

export default function App() {
  return (
    <div className="flex h-[766px] w-[1366px] flex-col overflow-hidden bg-[#e6e6e6]">
      <TitleBar />
      <MenuBar />
      <FormulaBar />
      <div className="flex h-[567px] shrink-0">
        <div className="flex w-[1344px] shrink-0 flex-col">
          <ColumnHeaders />
          <div className="flex">
            <RowHeaders />
            <Sheet />
          </div>
        </div>
        <VScroll />
      </div>
      <SheetTabs />
      <StatusBar />
      <Taskbar />
    </div>
  );
}
